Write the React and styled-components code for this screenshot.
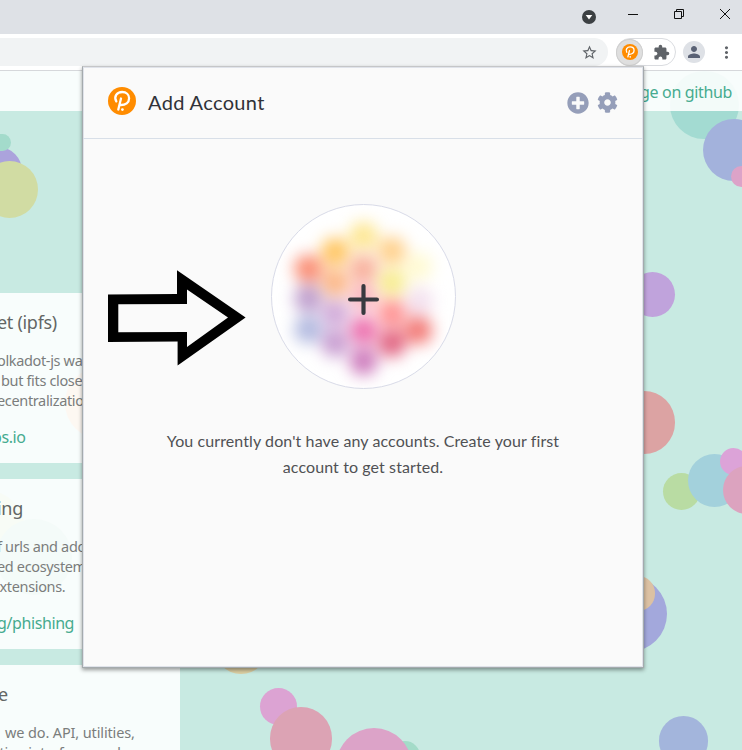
import React from "react";
import styled, { createGlobalStyle } from "styled-components";
import { MdExtension, MdStarBorder, MdPerson, MdMoreVert } from "react-icons/md";
import { FaPlusCircle, FaCog } from "react-icons/fa";

const GlobalStyle = createGlobalStyle`
  * { box-sizing: border-box; }
  html, body { margin: 0; padding: 0; overflow: hidden; }
`;

const Window = styled.div`
  position: relative;
  width: 742px;
  height: 750px;
  overflow: hidden;
  display: flex;
  flex-direction: column;
  background: #fff;
  font-family: "Noto Sans", sans-serif;
`;

const TitleBar = styled.div`
  height: 34px;
  flex: none;
  background: #dee1e6;
  display: flex;
  justify-content: flex-end;
  svg { display: block; }
`;

const Toolbar = styled.div`
  height: 37px;
  flex: none;
  background: #fff;
  border-bottom: 1px solid #d6d8db;
  display: flex;
  align-items: center;
`;

const AddressBar = styled.div`
  flex: none;
  width: 608px;
  height: 28px;
  border-radius: 0 14px 14px 0;
  background: #f1f3f4;
  display: flex;
  align-items: center;
  justify-content: flex-end;
  padding-right: 10px;
  color: #5f6368;
`;

const ExtensionPill = styled.div`
  flex: none;
  width: 60px;
  height: 28px;
  margin-left: 8px;
  border: 1px solid #dadce0;
  border-radius: 14px;
  display: flex;
  align-items: center;
  justify-content: space-between;
  padding-right: 5px;
  color: #5f6368;
`;

const ActiveExtension = styled.span`
  width: 27px;
  height: 27px;
  margin-left: -1px;
  border-radius: 50%;
  background: #dfdfdf;
  box-shadow: inset 0 0 0 1px #cfcfcf;
  display: flex;
  align-items: center;
  justify-content: center;
`;

const Avatar = styled.span`
  flex: none;
  width: 22px;
  height: 22px;
  margin-left: 7px;
  border-radius: 50%;
  background: #dee1e6;
  color: #5a6275;
  display: flex;
  align-items: center;
  justify-content: center;
`;

const MenuButton = styled.span`
  flex: none;
  margin-left: 12px;
  width: 19px;
  height: 19px;
  display: flex;
  color: #5f6368;
`;

const Page = styled.main`
  position: relative;
  flex: 1;
  overflow: hidden;
  background: #c8eae2;
`;

const Bubbles = styled.div`
  position: absolute;
  inset: -71px 0 0 0;
`;

const Bubble = styled.i`
  position: absolute;
  left: ${(p) => p.$x - p.$r}px;
  top: ${(p) => p.$y - p.$r}px;
  width: ${(p) => p.$r * 2}px;
  height: ${(p) => p.$r * 2}px;
  border-radius: 50%;
  background: ${(p) => p.$color};
`;

const Content = styled.div`
  position: relative;
`;

const PageHeader = styled.header`
  height: 40px;
  background: rgba(255, 255, 255, 0.87);
  display: flex;
  align-items: center;
  justify-content: flex-end;
  padding: 1px 10px 0 0;
`;

const HeaderLink = styled.a`
  color: #46ab8f;
  font-size: 16px;
  line-height: 22px;
  letter-spacing: -0.35px;
`;

const Cards = styled.div`
  margin-top: 182px;
  display: flex;
  flex-direction: column;
  gap: 16px;
`;

const Card = styled.section`
  width: 180px;
  height: 170px;
  overflow: hidden;
  padding-top: 17px;
  background: rgba(255, 255, 255, 0.87);
  white-space: nowrap;
`;

const CardTitle = styled.h3`
  margin: 0 0 15px ${(p) => p.$shift}px;
  font-size: 18px;
  font-weight: 400;
  line-height: 25px;
  letter-spacing: -0.3px;
  color: #636665;
`;

const CardLine = styled.p`
  margin: 0 0 0 ${(p) => p.$shift}px;
  font-size: 14.5px;
  line-height: 20px;
  letter-spacing: ${(p) => p.$track ?? -0.35}px;
  color: #7b7d7c;
`;

const CardLink = styled.a`
  display: block;
  margin: 16px 0 0 ${(p) => p.$shift}px;
  font-size: 16px;
  line-height: 22px;
  letter-spacing: -0.4px;
  color: #46ab8f;
`;

const Popup = styled.aside`
  position: absolute;
  left: 82px;
  top: 66px;
  width: 562px;
  height: 602px;
  display: flex;
  flex-direction: column;
  background: #fafafa;
  border: 1px solid #a4aaad;
  border-top-color: #c5c6c8;
  box-shadow: 0 2px 4px rgba(0, 0, 0, 0.4), inset 0 0 0 1px #e0e3ea;
  font-family: Lato, sans-serif;
`;

const PopupHeader = styled.header`
  height: 72px;
  flex: none;
  display: flex;
  align-items: center;
  border-bottom: 1px solid #d8dfe8;
  padding: 0 25px;
  svg { display: block; }
`;

const LogoSlot = styled.span`
  margin-top: -4px;
`;

const PopupTitle = styled.h1`
  flex: 1;
  margin: -1px 0 0 12px;
  font-size: 20px;
  font-weight: 400;
  line-height: 26px;
  letter-spacing: 0.35px;
  color: #303238;
`;

const Actions = styled.div`
  display: flex;
  align-items: center;
  gap: 8px;
  color: #959eb9;
`;

const PopupBody = styled.div`
  flex: 1;
  display: flex;
  flex-direction: column;
  align-items: center;
  padding-top: 65px;
`;

const AddButton = styled.button`
  width: 185px;
  height: 185px;
  padding: 0;
  border: 1px solid #d9dbe8;
  border-radius: 50%;
  overflow: hidden;
  background: #fff;
  svg { display: block; }
`;

const Hint = styled.p`
  margin: 39px 0 0;
  font-size: 16px;
  line-height: 26px;
  letter-spacing: 0.1px;
  text-align: center;
  color: #505154;
`;

const Pointer = styled.svg`
  position: absolute;
  left: 100px;
  top: 265px;
`;

const bubbles = [
  [-2.5, 171, 24, "#aba3dc"],
  [2, 142.7, 8.8, "#a3dbcb"],
  [9.3, 189.5, 28.5, "#d1dca3"],
  [101, 403, 36, "#f0c69c"],
  [-15, 530, 40, "#c6e6b8"],
  [34, 557, 38, "#a8dfce"],
  [704.4, 105, 34.2, "#a3dbd2"],
  [734, 150, 31, "#a3b2dc"],
  [741.5, 176.7, 10.6, "#dca3c8"],
  [652.5, 294.5, 22.6, "#c0a3dc"],
  [644.3, 422.5, 31.2, "#dca3a3"],
  [681.4, 491.7, 18.4, "#b9dca3"],
  [714.4, 480.2, 26.6, "#a3d1dc"],
  [733, 461, 13.5, "#dca3d8"],
  [746.5, 490, 24, "#dca3bf"],
  [628.3, 614, 38.4, "#a3a8dc"],
  [638.4, 593.5, 17.1, "#dcc1a3"],
  [683.5, 741, 24.6, "#a3b5dc"],
  [240.5, 647.3, 27, "#dccfa3"],
  [278.2, 706.3, 18.4, "#dca3d3"],
  [300.8, 738.5, 31.2, "#dca3b4"],
  [405, 756.4, 15.4, "#a3dbc8"],
  [374, 766.6, 38.3, "#dca3c8"],
];

const glowDots = [
  [92, 31, "#fde68f"],
  [63.5, 47, "#ffc45c"],
  [120.5, 46, "#ffcf88"],
  [36.5, 64, "#fa8a70"],
  [92, 64, "#f8ad98"],
  [63.5, 78, "#fcb583"],
  [120.5, 78, "#f7ec8d"],
  [147, 62, "#fffad2"],
  [36.5, 94, "#bd9ccc"],
  [92, 93, "#fab2bd"],
  [148, 97, "#f3e0ee"],
  [63.5, 109, "#d0a8d8"],
  [120.5, 109, "#ff8f8f"],
  [36.5, 125, "#b0b8df"],
  [92, 126, "#ec6cac"],
  [147, 126, "#f27773"],
  [63.5, 139, "#c79bd0"],
  [120.5, 139, "#e0617f"],
  [92, 157, "#cc78bb"],
];

const PolkadotLogo = ({ size }) => (
  <svg width={size} height={size} viewBox="0 0 28 28">
    <circle cx="14" cy="14" r="14" fill="#ff8c00" />
    <path
      d="M8.3 14.4C5.6 9.8 8.8 5 14.2 5c4 0 6.9 2.6 6.9 6.2 0 4.3-3.4 7-8.8 6.8M13 11.5 10.3 22.5"
      fill="none"
      stroke="#fff"
      strokeWidth="2.3"
      strokeLinecap="round"
    />
    <circle cx="14.4" cy="22.6" r="1.4" fill="#fff" />
  </svg>
);

const WindowControls = () => (
  <svg width="170" height="34" viewBox="572 0 170 34" fill="none" stroke="#111">
    <circle cx="589" cy="17" r="7" fill="#3c4043" stroke="none" />
    <path d="M585.7 15h6.6L589 19.5z" fill="#fff" stroke="none" />
    <path d="M628 14.5h10M674.5 11.5h7v7h-7zM676.5 11.5v-2h7v7h-2M720 9l10 10M730 9l-10 10" />
  </svg>
);

export default function App() {
  return (
    <Window>
      <GlobalStyle />
      <TitleBar>
        <WindowControls />
      </TitleBar>
      <Toolbar>
        <AddressBar>
          <MdStarBorder size={17} />
        </AddressBar>
        <ExtensionPill>
          <ActiveExtension>
            <PolkadotLogo size={16} />
          </ActiveExtension>
          <MdExtension size={17} />
        </ExtensionPill>
        <Avatar>
          <MdPerson size={18} />
        </Avatar>
        <MenuButton>
          <MdMoreVert size={19} />
        </MenuButton>
      </Toolbar>
      <Page>
        <Bubbles>
          {bubbles.map(([x, y, r, color], i) => (
            <Bubble key={i} $x={x} $y={y} $r={r} $color={color} />
          ))}
        </Bubbles>
        <Content>
          <PageHeader>
            <HeaderLink>page on github</HeaderLink>
          </PageHeader>
          <Cards>
            <Card>
              <CardTitle $shift={-3}>et (ipfs)</CardTitle>
              <CardLine $shift={-3}>olkadot-js wallet</CardLine>
              <CardLine $shift={1}>but fits closely</CardLine>
              <CardLine $shift={-3}>ecentralization</CardLine>
              <CardLink $shift={-8}>ps.io</CardLink>
            </Card>
            <Card>
              <CardTitle $shift={-3}>ing</CardTitle>
              <CardLine $shift={-3}>f urls and addresses</CardLine>
              <CardLine $shift={-3}>ed ecosystem</CardLine>
              <CardLine $shift={-8}>extensions.</CardLine>
              <CardLink $shift={-3}>g/phishing</CardLink>
            </Card>
            <Card>
              <CardTitle $shift={-2}>e</CardTitle>
              <CardLine $shift={5} $track={-0.13}>we do. API, utilities,</CardLine>
              <CardLine $shift={-7}>ction interfaces and</CardLine>
            </Card>
          </Cards>
        </Content>
      </Page>
      <Popup>
        <PopupHeader>
          <LogoSlot>
            <PolkadotLogo size={28} />
          </LogoSlot>
          <PopupTitle>Add Account</PopupTitle>
          <Actions>
            <FaPlusCircle size={22} />
            <FaCog size={21} />
          </Actions>
        </PopupHeader>
        <PopupBody>
          <AddButton aria-label="Add account">
            <svg width="183" height="183" viewBox="0 0 184 184">
              <defs>
                <filter id="glow" x="-30%" y="-30%" width="160%" height="160%" colorInterpolationFilters="sRGB">
                  <feGaussianBlur stdDeviation="8" />
                </filter>
              </defs>
              <g filter="url(#glow)">
                {glowDots.map(([x, y, color], i) => (
                  <circle key={i} cx={x} cy={y} r="14" fill={color} />
                ))}
              </g>
              <path
                d="M92 81.5v27M78.5 95h27"
                stroke="#38393f"
                strokeWidth="4.2"
                strokeLinecap="round"
              />
            </svg>
          </AddButton>
          <Hint>
            You currently don't have any accounts. Create your first
            <br />
            account to get started.
          </Hint>
        </PopupBody>
      </Popup>
      <Pointer width="150" height="105" viewBox="100 265 150 105">
        <path
          fillRule="evenodd"
          d="M108 294.5 177 294V270.3L245.6 317.5 177.6 365.6V341.6L108 342ZM118.3 304.3V332.2L187 332V347L228 317.5 187 289.5V304Z"
        />
      </Pointer>
    </Window>
  );
}
